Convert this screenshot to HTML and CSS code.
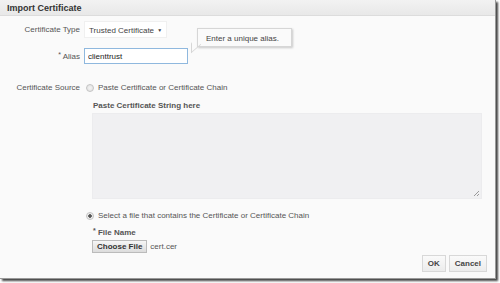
FILE: index.html
```html
<!DOCTYPE html>
<html>
<head>
  <meta charset="UTF-8">
  <title>Import Certificate</title>
  <link rel="stylesheet" href="styles.css">
</head>
<body>

<div class="dialog">
  <div class="dialog-header">Import Certificate</div>

  <div class="dialog-body">
    <!-- type + alias -->
    <div class="row row-type">
      <label class="row-label">Certificate Type</label>
      <div class="select">Trusted Certificate <span class="caret">&#9660;</span></div>
    </div>

    <div class="row row-alias">
      <label class="row-label"><span class="req">*</span> Alias</label>
      <div class="alias-wrap">
        <input class="text-input" type="text" value="clienttrust">
        <div class="tooltip">Enter a unique alias.</div>
      </div>
    </div>

    <!-- source -->
    <div class="row row-source">
      <label class="row-label">Certificate Source</label>
      <div class="radio-line">
        <span class="radio"></span>
        <span>Paste Certificate or Certificate Chain</span>
      </div>
    </div>

    <div class="sub-block">
      <div class="sub-label">Paste Certificate String here</div>
      <div class="textarea"><span class="grip"></span></div>
    </div>

    <div class="radio-line radio-file">
      <span class="radio checked"></span>
      <span>Select a file that contains the Certificate or Certificate Chain</span>
    </div>

    <div class="sub-block">
      <div class="sub-label file-label"><span class="req">*</span> File Name</div>
      <div class="file-line">
        <button class="file-btn">Choose File</button>
        <span>cert.cer</span>
      </div>
    </div>

    <div class="actions">
      <button class="btn">OK</button>
      <button class="btn">Cancel</button>
    </div>
  </div>
</div>

</body>
</html>
```

FILE: styles.css
```css
/* --- BASE --- */
* {
  margin: 0;
  padding: 0;
  box-sizing: border-box;
}
html, body {
  width: 500px;
  height: 283px;
  overflow: hidden;
  background: #fff;
  font-family: 'Liberation Sans', Arial, sans-serif;
  font-size: 8px;
  color: #444;
}

/* --- DIALOG FRAME --- */
.dialog {
  width: 496px;
  height: 279px;
  background: #fafafa;
  border-right: 1px solid #999;
  border-bottom: 1px solid #999;
  box-shadow: 2px 2px 2px #444;
}

.dialog-header {
  height: 16px;
  padding: 3px 7px 0;
  background: linear-gradient(#f2f2f2, #e8e8e8);
  border-bottom: 1px solid #dcdcdc;
  font-size: 9px;
  font-weight: bold;
  color: #333;
}

.dialog-body {
  padding: 4px 0 0;
}

/* --- FORM ROWS --- */
.row {
  display: flex;
  align-items: center;
  gap: 4px;
}
.row-label {
  width: 80px;
  text-align: right;
  color: #555;
}
.req {
  font-size: 7px;
  vertical-align: 2px;
}

.row-type {
  height: 18px;
}
.select {
  height: 17px;
  padding: 4px 4px 0;
  background: #fff;
  border: 1px solid #f0f0f0;
  color: #444;
  white-space: nowrap;
}
.caret {
  font-size: 5px;
  vertical-align: 1px;
  margin-left: 1px;
}

.row-alias {
  margin-top: 10px;
  height: 16px;
}
.alias-wrap {
  position: relative;
}
.text-input {
  display: block;
  width: 104px;
  height: 16px;
  padding: 0 3px;
  border: 1px solid #8fb8de;
  background: #fff;
  font: 8px 'Liberation Sans', Arial, sans-serif;
  color: #222;
  outline: none;
}

/* tooltip next to alias */
.tooltip {
  position: absolute;
  left: 113px;
  top: -20px;
  width: 95px;
  height: 19px;
  padding: 5px 0 0 8px;
  background: #fafafa;
  border: 1px solid #d6d6d6;
  box-shadow: 1px 1px 2px rgba(0, 0, 0, 0.2);
  color: #444;
  white-space: nowrap;
}
.tooltip::before {
  content: "";
  position: absolute;
  left: -7px;
  top: 10px;
  width: 9px;
  height: 9px;
  border-left: 1px solid #d6d6d6;
  border-bottom: 1px solid #d6d6d6;
  transform: skewY(-40deg);
}

.row-source {
  margin-top: 19px;
  gap: 3px;
}
.radio-line {
  display: flex;
  align-items: center;
  gap: 4px;
  color: #555;
}
.radio {
  width: 8px;
  height: 8px;
  margin-left: 3px;
  border-radius: 50%;
  border: 1px solid #c4c4c4;
  background: radial-gradient(#f4f4f4, #dedede);
}
.radio.checked {
  background: radial-gradient(#555 0 1.5px, #ececec 2px);
}

/* --- SUB BLOCKS --- */
.sub-block {
  margin-left: 92px;
}
.sub-label {
  margin-top: 9px;
  padding-left: 1px;
  font-weight: bold;
  color: #555;
}
.file-label {
  margin-top: 7px;
}
.textarea {
  position: relative;
  width: 390px;
  height: 86px;
  margin-top: 3px;
  background: #f0f0f2;
  border: 1px solid #ececee;
}
.grip {
  position: absolute;
  right: 2px;
  bottom: 2px;
  width: 5px;
  height: 5px;
  background: linear-gradient(135deg, transparent 45%, #999 45% 55%, transparent 55% 70%, #999 70% 80%, transparent 80%);
}

.radio-file {
  margin: 12px 0 0 83px;
}

.file-line {
  display: flex;
  align-items: center;
  gap: 3px;
  margin-top: 3px;
  color: #555;
}
.file-btn {
  height: 13px;
  padding: 0 4px;
  border: 1px solid #bbb;
  background: linear-gradient(#f6f6f6, #dcdcdc);
  font: bold 8px 'Liberation Sans', Arial, sans-serif;
  color: #333;
}

/* --- ACTIONS --- */
.actions {
  display: flex;
  justify-content: flex-end;
  gap: 3px;
  margin: 2px 8px 0 0;
}
.btn {
  height: 17px;
  padding: 0 5px;
  border: 1px solid #d8d8d8;
  background: linear-gradient(#fafafa, #ececec);
  font: bold 8px 'Liberation Sans', Arial, sans-serif;
  color: #444;
}
```
